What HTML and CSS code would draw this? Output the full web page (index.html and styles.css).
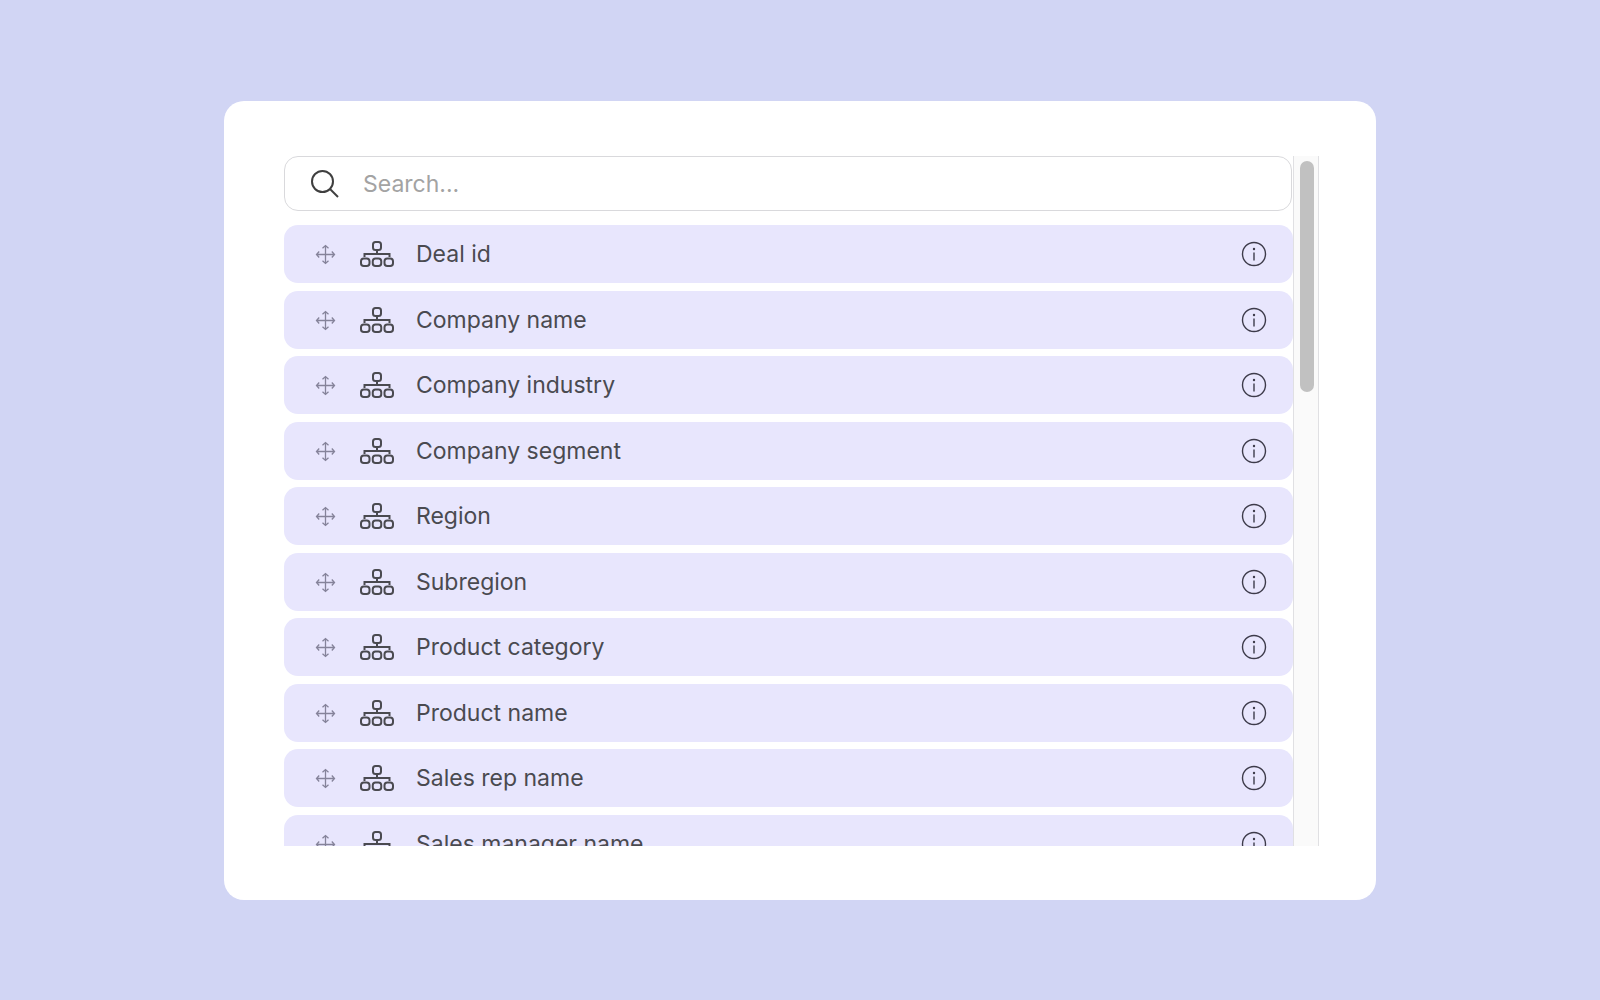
FILE: index.html
```html
<!DOCTYPE html>
<html lang="en">
<head>
  <meta charset="UTF-8">
  <meta name="viewport" content="width=device-width, initial-scale=1.0">
  <title>Fields</title>
  <link rel="stylesheet" href="styles.css">
</head>
<body>

<!-- Icons used in every row -->
<svg class="icon-defs" aria-hidden="true">
  <symbol id="icon-move" viewBox="0 0 22 22">
    <path d="M11.500 2.500v18M2.500 11.500h18M8.500 5.200l3-2.700 3 2.700M8.500 17.800l3 2.700 3-2.700M5.200 8.500l-2.700 3 2.700 3M17.800 8.500l2.700 3-2.700 3"/>
  </symbol>
  <symbol id="icon-tree" viewBox="0 0 36 28">
    <rect x="14" y="2" width="8" height="8" rx="2.500"/>
    <rect x="2" y="18.500" width="8.500" height="7.500" rx="2.800"/>
    <rect x="13.750" y="18.500" width="8.500" height="7.500" rx="2.800"/>
    <rect x="25.500" y="18.500" width="8.500" height="7.500" rx="2.800"/>
    <path d="M18 10v4M5.500 17v-3h25V17"/>
  </symbol>
  <symbol id="icon-info" viewBox="0 0 26 26">
    <circle cx="13" cy="13" r="11.500"/>
    <path d="M13 11.500v8"/>
    <circle class="dot" cx="13" cy="8" r="1.200"/>
  </symbol>
</svg>

<main class="card">
  <div class="panel">
    <div class="content">
      <label class="search">
        <svg class="icon-search" viewBox="0 0 30 30" aria-hidden="true">
          <circle cx="12.500" cy="12.500" r="10.500"/>
          <path d="M20 20l8 8"/>
        </svg>
        <input class="search-input" type="text" placeholder="Search..." aria-label="Search">
      </label>

      <ul class="field-list" id="fieldList"></ul>
    </div>

    <div class="scrollbar">
      <div class="scrollbar-thumb"></div>
    </div>
  </div>
</main>

<script>
  const fields = [
    'Deal id',
    'Company name',
    'Company industry',
    'Company segment',
    'Region',
    'Subregion',
    'Product category',
    'Product name',
    'Sales rep name',
    'Sales manager name'
  ];

  // Build the list of draggable fields
  document.getElementById('fieldList').innerHTML = fields.map(name => `
    <li class="field">
      <svg class="icon-move"><use href="#icon-move"/></svg>
      <svg class="icon-tree"><use href="#icon-tree"/></svg>
      <span class="field-name">${name}</span>
      <button class="info-button" type="button" aria-label="About ${name}">
        <svg class="icon-info"><use href="#icon-info"/></svg>
      </button>
    </li>`).join('');
</script>

</body>
</html>
```
FILE: styles.css
```css
* {
  box-sizing: border-box;
}

body {
  margin: 0;
  padding: 101px 0;
  background-color: #d1d5f4;
  font-family: Inter, "Liberation Sans", sans-serif;
  font-size: 23px;
  color: #4a4a50;
}

.card {
  width: 72%;
  margin: 0 auto;
  padding: 55px 57px 54px 60px;
  background-color: #fff;
  border-radius: 20px;
}

.panel {
  display: flex;
  height: 690px;
  overflow: hidden;
}

.content {
  flex: 1;
  min-width: 0;
}

/* Search box */
.search {
  display: flex;
  align-items: center;
  gap: 23px;
  height: 55px;
  margin-right: 1px;
  padding: 0 25px;
  border: 1px solid #d9d9dc;
  border-radius: 14px;
}

.search-input {
  flex: 1;
  min-width: 0;
  padding: 0;
  border: none;
  outline: none;
  background: none;
  font: inherit;
  color: inherit;
}

.search-input::placeholder {
  color: #a3a3a3;
  opacity: 1;
}

/* Field rows */
.field-list {
  display: flex;
  flex-direction: column;
  justify-content: space-between;
  height: 648px;
  margin: 14px 0 0;
  padding: 0;
  list-style: none;
}

.field {
  display: flex;
  align-items: center;
  height: 58px;
  padding: 0 26px 0 30px;
  background-color: #e8e6fd;
  border-radius: 14px;
}

.field-name {
  flex: 1;
  margin-left: 21px;
}

.info-button {
  display: flex;
  padding: 0;
  border: none;
  background: none;
  color: inherit;
  cursor: pointer;
}

/* Icons */
.icon-defs {
  position: absolute;
  width: 0;
  height: 0;
}

svg {
  flex: none;
  fill: none;
  stroke: currentColor;
}

.icon-search {
  width: 30px;
  height: 30px;
  stroke: #3f3f3f;
  stroke-width: 2;
}

.icon-move {
  width: 22px;
  height: 22px;
  stroke: #85839a;
  stroke-width: 1.3;
}

.icon-tree {
  width: 36px;
  height: 28px;
  margin-left: 23px;
  stroke-width: 2;
}

.icon-info {
  width: 26px;
  height: 26px;
  stroke: #3d3b4a;
  stroke-width: 1.4;
}

.dot {
  fill: #3d3b4a;
  stroke: none;
}

/* Scrollbar */
.scrollbar {
  width: 26px;
  padding: 5px 4px 0 6px;
  background-color: #fafafa;
  border: solid #e0e0e3;
  border-width: 0 1px;
}

.scrollbar-thumb {
  height: 231px;
  background-color: #c1c1c1;
  border-radius: 7px;
}
```
